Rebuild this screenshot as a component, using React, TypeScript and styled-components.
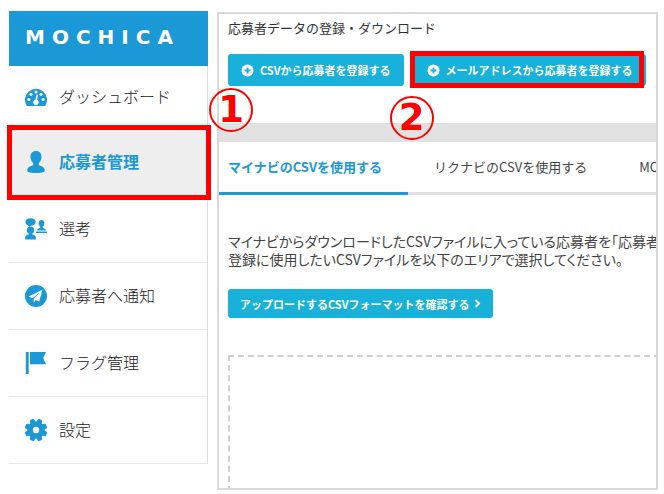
import React from "react";
import styled, { createGlobalStyle, css } from "styled-components";

const blue = "#1b98d6";
const cyan = "#18b1da";
const red = "#ff0000";
const line = "#d9d9d9";

const GlobalStyle = createGlobalStyle`
  *, *::before, *::after { box-sizing: border-box; }
  body {
    margin: 0;
    background: #fff;
    color: #444;
    font-family: "Noto Sans CJK JP", sans-serif;
  }
  button { font: inherit; cursor: pointer; }
`;

const Page = styled.div`
  display: grid;
  grid-template-columns: 199px minmax(0, 1fr);
  gap: 9px;
  min-height: 100vh;
  padding: 11px 6px 4px 9px;
`;

const Sidebar = styled.aside`
  align-self: start;
`;

const Brand = styled.div`
  display: flex;
  align-items: center;
  gap: 7px;
  height: 55px;
  padding: 0 16px 4px;
  background: ${blue};
  color: #fff;
  font: 700 20px/24px "DejaVu Sans", sans-serif;
`;

const Menu = styled.nav`
  border-right: 1px solid #dedede;
`;

const MenuItem = styled.a<{ $active?: boolean; $first?: boolean }>`
  position: relative;
  display: flex;
  align-items: center;
  gap: 12px;
  height: ${(p) => (p.$first ? 63 : 67)}px;
  padding: 0 16px;
  border-bottom: 1px solid #ebebeb;
  background: ${(p) => (p.$active ? "#eeeeee" : "#fff")};
  color: ${(p) => (p.$active ? blue : "#222")};
  font-size: 16px;
  font-weight: ${(p) => (p.$active ? 700 : 300)};
  line-height: 24px;
  text-decoration: none;
  svg { flex: none; color: ${blue}; }
  span { padding-bottom: 2px; }
`;

const Highlight = styled.i<{ $area: "menu" | "button" }>`
  position: absolute;
  z-index: 1;
  border: 5px solid ${red};
  pointer-events: none;
  inset: ${(p) => (p.$area === "menu" ? "-4px -4px -5px -2px" : "-3px 2px -2px -4px")};
`;

const Step = styled.b<{ $step: 1 | 2 }>`
  position: absolute;
  z-index: 2;
  display: flex;
  align-items: center;
  justify-content: center;
  width: 44px;
  height: 44px;
  border: 2px solid ${red};
  border-radius: 50%;
  color: ${red};
  font: 700 37px/40px "DejaVu Sans", sans-serif;
  ${(p) => (p.$step === 1 ? css`right: -46px; top: -41px;` : css`left: -24px; top: 42px;`)}
`;

const Panel = styled.main`
  display: flex;
  flex-direction: column;
  margin-top: 1px;
  border: 2px solid ${line};
  clip-path: inset(0 0 0 -20px);
`;

const Register = styled.section`
  padding: 4px 9px 37px;
`;

const Title = styled.h1`
  margin: 0 0 16px;
  color: #333;
  font-size: 13px;
  font-weight: 400;
  line-height: 20px;
`;

const Actions = styled.div`
  display: flex;
  gap: 10px;
`;

const Anchor = styled.div`
  position: relative;
  flex: none;
`;

const Button = styled.button<{ $small?: boolean }>`
  display: flex;
  flex: none;
  align-items: center;
  gap: ${(p) => (p.$small ? 4 : 6)}px;
  height: ${(p) => (p.$small ? 29 : 32)}px;
  padding: 0 ${(p) => (p.$small ? 12 : 13)}px;
  border: 0;
  border-radius: 3px;
  background: ${cyan};
  color: #fff;
  font-size: 11px;
  font-weight: 700;
  line-height: 16px;
  white-space: nowrap;
`;

const Band = styled.div`
  height: 19px;
  background: #e1e1e1;
`;

const Tabs = styled.div`
  display: flex;
  overflow: hidden;
`;

const Tab = styled.button<{ $active?: boolean; $last?: boolean }>`
  flex: ${(p) => (p.$last ? "1 0 auto" : "none")};
  height: 53px;
  padding: 0 26px 0 ${(p) => (p.$active ? 9 : 26)}px;
  border: 0;
  border-bottom: 3px solid ${(p) => (p.$active ? blue : "#e1e1e1")};
  background: #fff;
  color: ${(p) => (p.$active ? blue : "#444")};
  font-size: 13px;
  font-weight: ${(p) => (p.$active ? 700 : 400)};
  line-height: 20px;
  text-align: left;
  white-space: nowrap;
`;

const Upload = styled.section`
  display: flex;
  flex: 1;
  flex-direction: column;
  align-items: flex-start;
  padding: 37px 0 0 9px;
  overflow: hidden;
`;

const Guide = styled.p`
  margin: 0 0 21px;
  font-size: 14px;
  font-feature-settings: "palt";
  line-height: 18px;
  white-space: nowrap;
`;

const DropArea = styled.div`
  flex: 1;
  align-self: stretch;
  min-height: 133px;
  margin: 37px -4px -4px 0;
  border: 2px dashed #d0d0d0;
`;

const Icon = ({ children }: { children: React.ReactNode }) => (
  <svg width="22" height="22" viewBox="0 0 22 22" fill="currentColor" aria-hidden="true">
    {children}
  </svg>
);

const GaugeIcon = () => (
  <Icon>
    <path d="M1.600 19.500A11 11 0 1 1 20.400 19.500Q20 20 19.300 20H2.700Q2 20 1.600 19.500Z" />
    <g fill="#fff">
      <circle cx="3.900" cy="13.500" r="1.500" />
      <circle cx="6" cy="8.300" r="1.500" />
      <circle cx="11" cy="6" r="1.500" />
      <circle cx="16" cy="8.300" r="1.500" />
      <circle cx="18.100" cy="13.500" r="1.500" />
      <path d="M11.700 8.500 13 8.800 12.100 13.800A2.800 2.800 0 1 1 10.400 13.600Z" />
    </g>
  </Icon>
);

const UserIcon = () => (
  <Icon>
    <path d="M11 0C14.500 0 16.500 2.200 16.500 5.800 16.500 8.600 15.300 10.900 13.800 12V14.300C16 15.200 19.800 15.800 19.800 19.400 19.800 21.300 15 22 11 22S2.200 21.300 2.200 19.400C2.200 15.800 6 15.200 8.200 14.300V12C6.700 10.900 5.500 8.600 5.500 5.800 5.500 2.200 7.500 0 11 0Z" />
  </Icon>
);

const InterviewIcon = () => (
  <Icon>
    <ellipse cx="5.500" cy="4" rx="5.200" ry="3.800" />
    <path d="M3 6.500 4.500 9 6.500 6.500Z" />
    <circle cx="5.500" cy="12.300" r="3.700" />
    <path d="M4 14H7V16.200C9.400 16.900 10.800 17.500 10.800 19.600V21.500H.2V19.600C.2 17.500 1.600 16.900 4 16.200Z" />
    <path d="M16.500 2C18.700 2 19.400 3.400 19.400 5.200 19.400 6.800 18.600 8 17.800 8.600V9.800C19.500 10.400 20.800 10.800 20.800 12.600H12.200C12.200 10.800 13.500 10.400 15.200 9.800V8.600C14.400 8 13.600 6.800 13.600 5.200 13.600 3.400 14.300 2 16.500 2Z" />
    <path d="M11 13.500H22V15H11Z" />
  </Icon>
);

const SendIcon = () => (
  <Icon>
    <circle cx="11" cy="11" r="11" />
    <path fill="#fff" d="M17.500 4.800 3.800 11.400 7.500 13.200 15 7.200 8.700 13.900V17.500L10.800 15L14.200 16.500Z" />
  </Icon>
);

const FlagIcon = () => (
  <Icon>
    <path d="M.8 0H3.700V22H.8ZM5 0H21L18.200 6 21 12.200H5Z" />
  </Icon>
);

const GearIcon = () => (
  <Icon>
    <circle cx="11" cy="11" r="8.800" />
    {[22.5, 67.5, 112.5, 157.5].map((angle) => (
      <rect key={angle} x="8.500" y="-.3" width="5" height="22.600" rx="1.300" transform={`rotate(${angle} 11 11)`} />
    ))}
    <circle cx="11" cy="11" r="3.200" fill="#fff" />
  </Icon>
);

const PlusIcon = () => (
  <svg width="13" height="13" viewBox="0 0 13 13" aria-hidden="true">
    <circle cx="6.500" cy="6.500" r="6" fill="#fff" />
    <path d="M6.500 3.500V9.500M3.500 6.500H9.500" stroke={cyan} strokeWidth="1.800" />
  </svg>
);

const ChevronIcon = () => (
  <svg width="7" height="9" viewBox="0 0 7 9" fill="none" aria-hidden="true">
    <path d="M1.500 1 5 4.500 1.500 8" stroke="#fff" strokeWidth="1.900" />
  </svg>
);

const items = [
  { label: "ダッシュボード", icon: <GaugeIcon /> },
  { label: "応募者管理", icon: <UserIcon />, active: true },
  { label: "選考", icon: <InterviewIcon /> },
  { label: "応募者へ通知", icon: <SendIcon /> },
  { label: "フラグ管理", icon: <FlagIcon /> },
  { label: "設定", icon: <GearIcon /> },
];

export default function App() {
  return (
    <>
      <GlobalStyle />
      <Page>
        <Sidebar>
          <Brand>
            {[..."MOCHICA"].map((letter, i) => (
              <span key={i}>{letter}</span>
            ))}
          </Brand>
          <Menu>
            {items.map((item, i) => (
              <MenuItem key={item.label} href="#" $active={item.active} $first={i === 0}>
                {item.icon}
                <span>{item.label}</span>
                {item.active && (
                  <>
                    <Highlight $area="menu" />
                    <Step $step={1}>1</Step>
                  </>
                )}
              </MenuItem>
            ))}
          </Menu>
        </Sidebar>
        <Panel>
          <Register>
            <Title>応募者データの登録・ダウンロード</Title>
            <Actions>
              <Button>
                <PlusIcon />
                CSVから応募者を登録する
              </Button>
              <Anchor>
                <Button>
                  <PlusIcon />
                  メールアドレスから応募者を登録する
                </Button>
                <Highlight $area="button" />
                <Step $step={2}>2</Step>
              </Anchor>
            </Actions>
          </Register>
          <Band />
          <Tabs role="tablist">
            <Tab role="tab" aria-selected="true" $active>マイナビのCSVを使用する</Tab>
            <Tab role="tab" aria-selected="false">リクナビのCSVを使用する</Tab>
            <Tab role="tab" aria-selected="false" $last>MO</Tab>
          </Tabs>
          <Upload>
            <Guide>
              マイナビからダウンロードしたCSVファイルに入っている応募者を「応募者
              <br />
              登録に使用したいCSVファイルを以下のエリアで選択してください。
            </Guide>
            <Button $small>
              アップロードするCSVフォーマットを確認する
              <ChevronIcon />
            </Button>
            <DropArea />
          </Upload>
        </Panel>
      </Page>
    </>
  );
}
